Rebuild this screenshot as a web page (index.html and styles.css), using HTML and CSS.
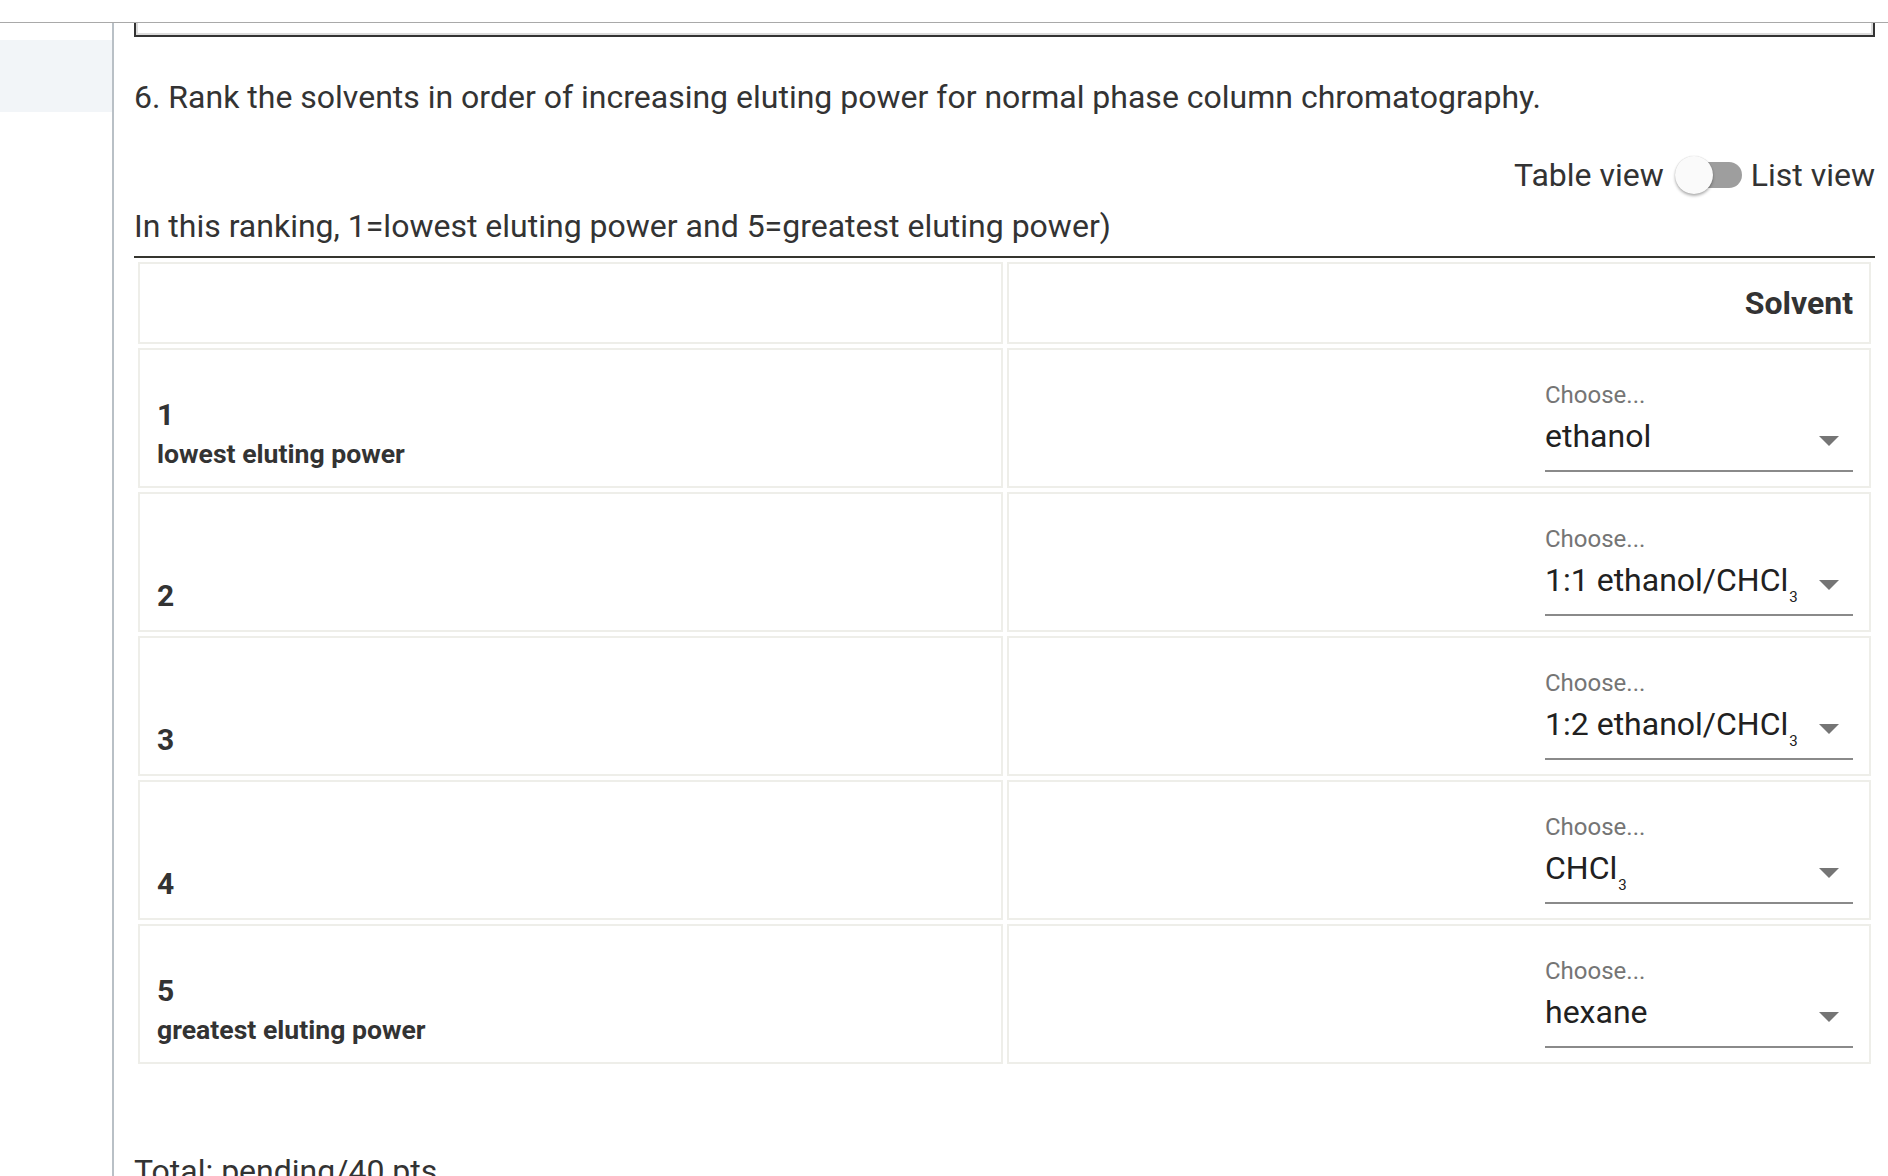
FILE: index.html
```html
<!DOCTYPE html>
<html lang="en">
<head>
<meta charset="utf-8">
<title>Ranking question</title>
<link rel="stylesheet" href="styles.css">
</head>
<body>
<div class="topbar"></div>
<div class="layout">
  <aside class="sidebar">
    <div class="side-active"></div>
  </aside>
  <main class="main">
    <div class="prev-box"></div>
    <p class="question">6. Rank the solvents in order of increasing eluting power for normal phase column chromatography.</p>
    <div class="toggle-row">
      <span class="toggle-label">Table view</span>
      <span class="switch"><span class="track"></span><span class="thumb"></span></span>
      <span class="toggle-label">List view</span>
    </div>
    <p class="instruction">In this ranking, 1=lowest eluting power and 5=greatest eluting power)</p>
    <div class="rank-table">
      <div class="cell head"></div>
      <div class="cell head head-right">Solvent</div>

      <div class="cell rank"><div class="num">1</div><div class="desc">lowest eluting power</div></div>
      <div class="cell pick">
        <div class="select">
          <div class="sel-label">Choose...</div>
          <div class="sel-value"><span>ethanol</span><span class="arrow"></span></div>
        </div>
      </div>

      <div class="cell rank"><div class="num">2</div></div>
      <div class="cell pick">
        <div class="select">
          <div class="sel-label">Choose...</div>
          <div class="sel-value"><span>1:1 ethanol/CHCl<sub>3</sub></span><span class="arrow"></span></div>
        </div>
      </div>

      <div class="cell rank"><div class="num">3</div></div>
      <div class="cell pick">
        <div class="select">
          <div class="sel-label">Choose...</div>
          <div class="sel-value"><span>1:2 ethanol/CHCl<sub>3</sub></span><span class="arrow"></span></div>
        </div>
      </div>

      <div class="cell rank"><div class="num">4</div></div>
      <div class="cell pick">
        <div class="select">
          <div class="sel-label">Choose...</div>
          <div class="sel-value"><span>CHCl<sub>3</sub></span><span class="arrow"></span></div>
        </div>
      </div>

      <div class="cell rank"><div class="num">5</div><div class="desc">greatest eluting power</div></div>
      <div class="cell pick">
        <div class="select">
          <div class="sel-label">Choose...</div>
          <div class="sel-value"><span>hexane</span><span class="arrow"></span></div>
        </div>
      </div>
    </div>
    <p class="total">Total: pending/40 pts</p>
  </main>
</div>
</body>
</html>
```
FILE: styles.css
```css
* { box-sizing: border-box; }
html, body { margin: 0; padding: 0; background: #fff; }
body {
  font-family: Roboto, "Noto Sans", "Liberation Sans", sans-serif;
  color: #333333;
  height: 1176px;
  overflow: hidden;
}
.topbar {
  height: 23px;
  border-bottom: 1px solid #a9a9a9;
}
.layout {
  display: flex;
  min-height: 1153px;
}
.sidebar {
  width: 114px;
  flex: none;
  border-right: 2px solid #b9c0c6;
}
.side-active {
  margin-top: 17px;
  height: 72px;
  background: #f2f5f8;
}
.main {
  flex: 1;
  padding: 0 13px 0 20px;
}
.prev-box {
  height: 14px;
  border: 2px solid #333;
  border-top: none;
  box-shadow: inset 2px -2px 0 #dcdcdc, inset -2px 0 0 #dcdcdc;
}
.question {
  margin: 42px 0 0;
  font-size: 32px;
  line-height: 36px;
}
.toggle-row {
  margin-top: 40px;
  display: flex;
  justify-content: flex-end;
  align-items: center;
  height: 40px;
}
.toggle-label {
  font-size: 32px;
  line-height: 36px;
}
.switch {
  position: relative;
  width: 67px;
  height: 38px;
  margin: 0 9px 0 11px;
}
.track {
  position: absolute;
  left: 6px;
  right: 0;
  top: 6px;
  height: 26px;
  border-radius: 13px;
  background: #9e9e9e;
}
.thumb {
  position: absolute;
  left: 0;
  top: 0;
  width: 38px;
  height: 38px;
  border-radius: 50%;
  background: #fafafa;
  box-shadow: 0 2px 3px rgba(0,0,0,0.3), 0 0 1px rgba(0,0,0,0.2);
}
.instruction {
  margin: 13px 0 0;
  font-size: 32px;
  line-height: 36px;
  padding-bottom: 12px;
  border-bottom: 2px solid #35352f;
}
.rank-table {
  display: grid;
  grid-template-columns: 1fr 1fr;
  grid-template-rows: 82px repeat(5, 140px);
  gap: 4px;
  padding: 4px;
}
.cell {
  border: 2px solid #eeeee9;
}
.head {
  display: flex;
  align-items: center;
  padding: 0 16px 0 18px;
}
.head-right {
  justify-content: flex-end;
  font-weight: 700;
  font-size: 32px;
}
.rank {
  display: flex;
  flex-direction: column;
  justify-content: flex-end;
  padding: 0 17px 16px;
  font-weight: 700;
}
.num {
  font-size: 30px;
  line-height: 36px;
}
.desc {
  margin-top: 5px;
  font-size: 26.6px;
  line-height: 32px;
}
.pick {
  display: flex;
  justify-content: flex-end;
  align-items: flex-end;
  padding: 0 16px 14px 18px;
}
.select {
  width: 308px;
}
.sel-label {
  font-size: 24px;
  line-height: 28px;
  color: #757575;
  margin-bottom: 9px;
}
.sel-value {
  display: flex;
  justify-content: space-between;
  align-items: center;
  font-size: 32px;
  line-height: 36px;
  color: #212121;
  padding-bottom: 16px;
  border-bottom: 2px solid #8a8a8a;
}
.sel-value sub {
  font-size: 15px;
  vertical-align: -11px;
  line-height: 0;
  margin-left: 1px;
}
.arrow {
  flex: none;
  width: 0;
  height: 0;
  margin: 10px 14px 0 0;
  border-left: 10px solid transparent;
  border-right: 10px solid transparent;
  border-top: 10px solid #757575;
}
.total {
  margin: 85px 0 0;
  font-size: 32px;
  line-height: 36px;
}
```
